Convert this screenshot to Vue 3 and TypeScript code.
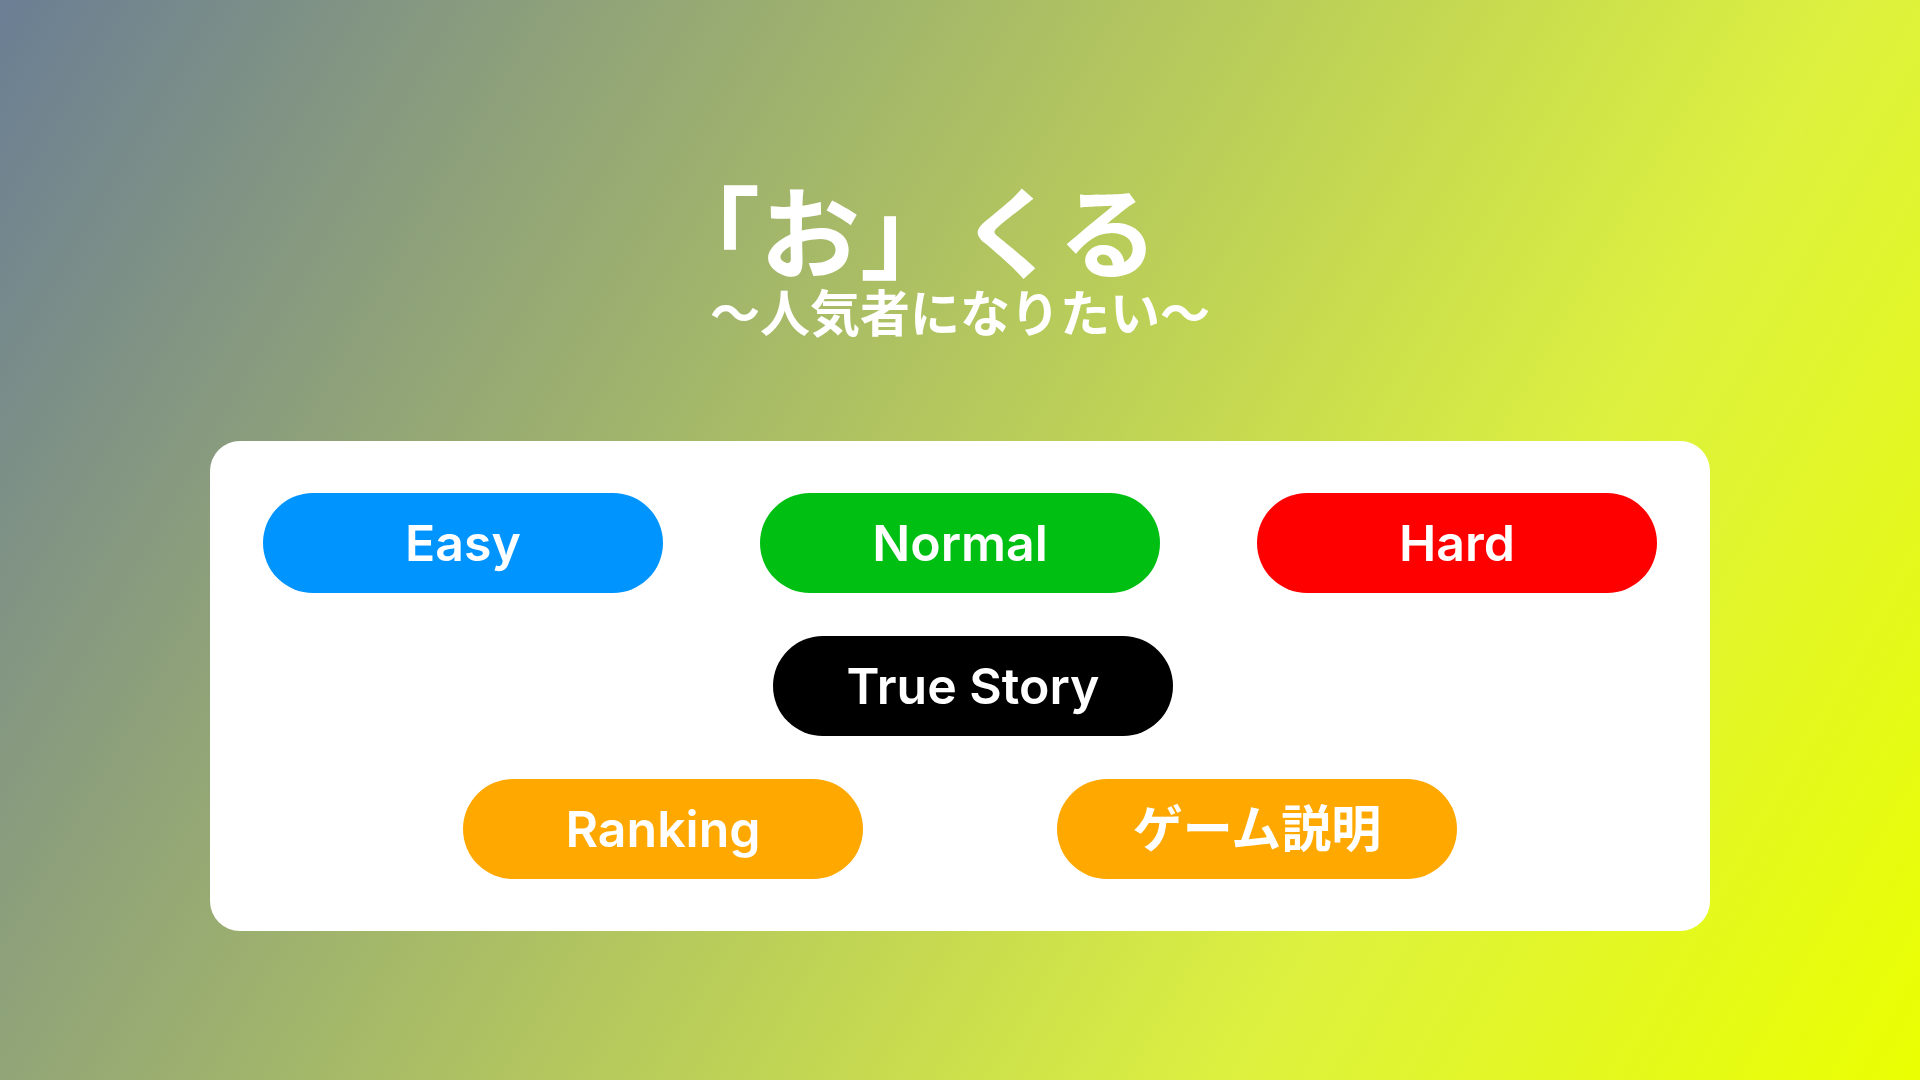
<script setup lang="ts">
interface MenuItem {
  label: string
  tone: string
}

const rows: { name: string; items: MenuItem[] }[] = [
  {
    name: 'levels',
    items: [
      { label: 'Easy', tone: 'blue' },
      { label: 'Normal', tone: 'green' },
      { label: 'Hard', tone: 'red' },
    ],
  },
  { name: 'story', items: [{ label: 'True Story', tone: 'black' }] },
  {
    name: 'extras',
    items: [
      { label: 'Ranking', tone: 'orange' },
      { label: 'ゲーム説明', tone: 'orange' },
    ],
  },
]
</script>

<template>
  <main class="home" lang="ja">
    <header class="heading">
      <h1 class="title">「お」くる</h1>
      <p class="subtitle">〜人気者になりたい〜</p>
    </header>
    <nav class="menu">
      <div v-for="row in rows" :key="row.name" class="row" :class="row.name">
        <button
          v-for="item in row.items"
          :key="item.label"
          type="button"
          class="choice"
          :class="item.tone"
        >
          {{ item.label }}
        </button>
      </div>
    </nav>
  </main>
</template>

<style>
body {
  margin: 0;
}
</style>

<style scoped>
.home {
  display: flex;
  flex-direction: column;
  align-items: center;
  justify-content: center;
  gap: 98px;
  box-sizing: border-box;
  min-height: 100vh;
  padding-top: 36px;
  background: linear-gradient(120deg, #6b7e94 0%, #ddf13f 73%, #eaff00 100%);
  color: #fff;
  font-family: Inter, "Noto Sans CJK JP", sans-serif;
}

.heading {
  font-weight: 600;
}

.title {
  margin: 0;
  font-size: 100px;
  line-height: 100px;
  font-weight: 600;
  text-spacing-trim: trim-start;
}

.subtitle {
  margin: 0;
  font-size: 50px;
  line-height: 58px;
}

.menu {
  display: flex;
  flex-direction: column;
  gap: 43px;
  box-sizing: border-box;
  width: 78.125%;
  padding: 52px 53px;
  border-radius: 30px;
  background: #fff;
}

.row {
  display: flex;
  justify-content: space-between;
}

.story {
  justify-content: center;
  padding-left: 26px;
}

.extras {
  justify-content: center;
  gap: 194px;
}

.choice {
  width: 400px;
  height: 100px;
  padding: 0;
  border: 0;
  border-radius: 50px;
  color: #fff;
  font-family: inherit;
  font-size: 50px;
  font-weight: 600;
  line-height: 60px;
  cursor: pointer;
}

.blue {
  background: #0094ff;
}

.green {
  background: #00bf13;
}

.red {
  background: #f00;
}

.black {
  background: #000;
}

.orange {
  background: #ffa800;
}
</style>
